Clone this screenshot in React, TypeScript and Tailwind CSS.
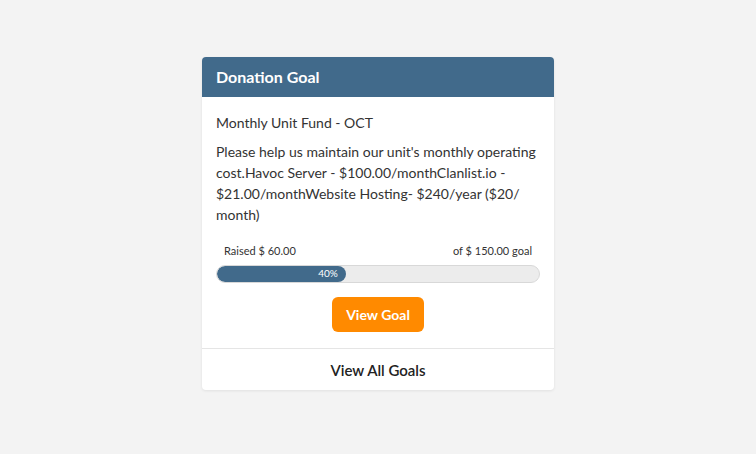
export default function App() {
  return (
    <div className="flex min-h-screen items-start justify-center bg-[#f3f3f3] pt-[57px] font-['Lato','Liberation_Sans',sans-serif]">
      <div className="w-[352px] overflow-hidden rounded-[4px] bg-white shadow-[0_1px_3px_rgba(0,0,0,0.08)]">
        {/* Header */}
        <div className="flex h-10 items-center bg-[#416a8b] px-[14px]">
          <h3 className="text-[16px] font-bold text-white">Donation Goal</h3>
        </div>

        {/* Body */}
        <div className="px-[14px] pt-[16px] pb-[16px] text-[#333]">
          <p className="text-[14px] leading-[20px]">Monthly Unit Fund - OCT</p>
          <p className="mt-[8px] text-[14px] leading-[21px]">
            Please help us maintain our unit's monthly operating cost.Havoc Server - $100.00/monthClanlist.io - $21.00/monthWebsite Hosting- $240/year ($20/<wbr />month)
          </p>

          <div className="mt-[18px] flex justify-between px-2 text-[11px] text-[#333]">
            <span>Raised $ 60.00</span>
            <span>of $ 150.00 goal</span>
          </div>
          <div className="mt-[5px] h-[18px] w-full overflow-hidden rounded-full border border-[#d8d8d8] bg-[#ececec]">
            <div className="flex h-full items-center justify-end rounded-full bg-[#416a8b] pr-[8px] text-[10px] text-white" style={{ width: "40%" }}>
              40%
            </div>
          </div>

          <div className="mt-[14px] flex justify-center">
            <button className="h-[35px] w-[92px] rounded-[6px] bg-[#ff8a00] text-[14px] font-bold text-white">View Goal</button>
          </div>
        </div>

        {/* Footer */}
        <div className="flex h-[42px] items-center justify-center border-t border-[#e5e5e5] pt-[2px]">
          <span className="text-[15px] font-semibold text-[#222]">View All Goals</span>
        </div>
      </div>
    </div>
  );
}
